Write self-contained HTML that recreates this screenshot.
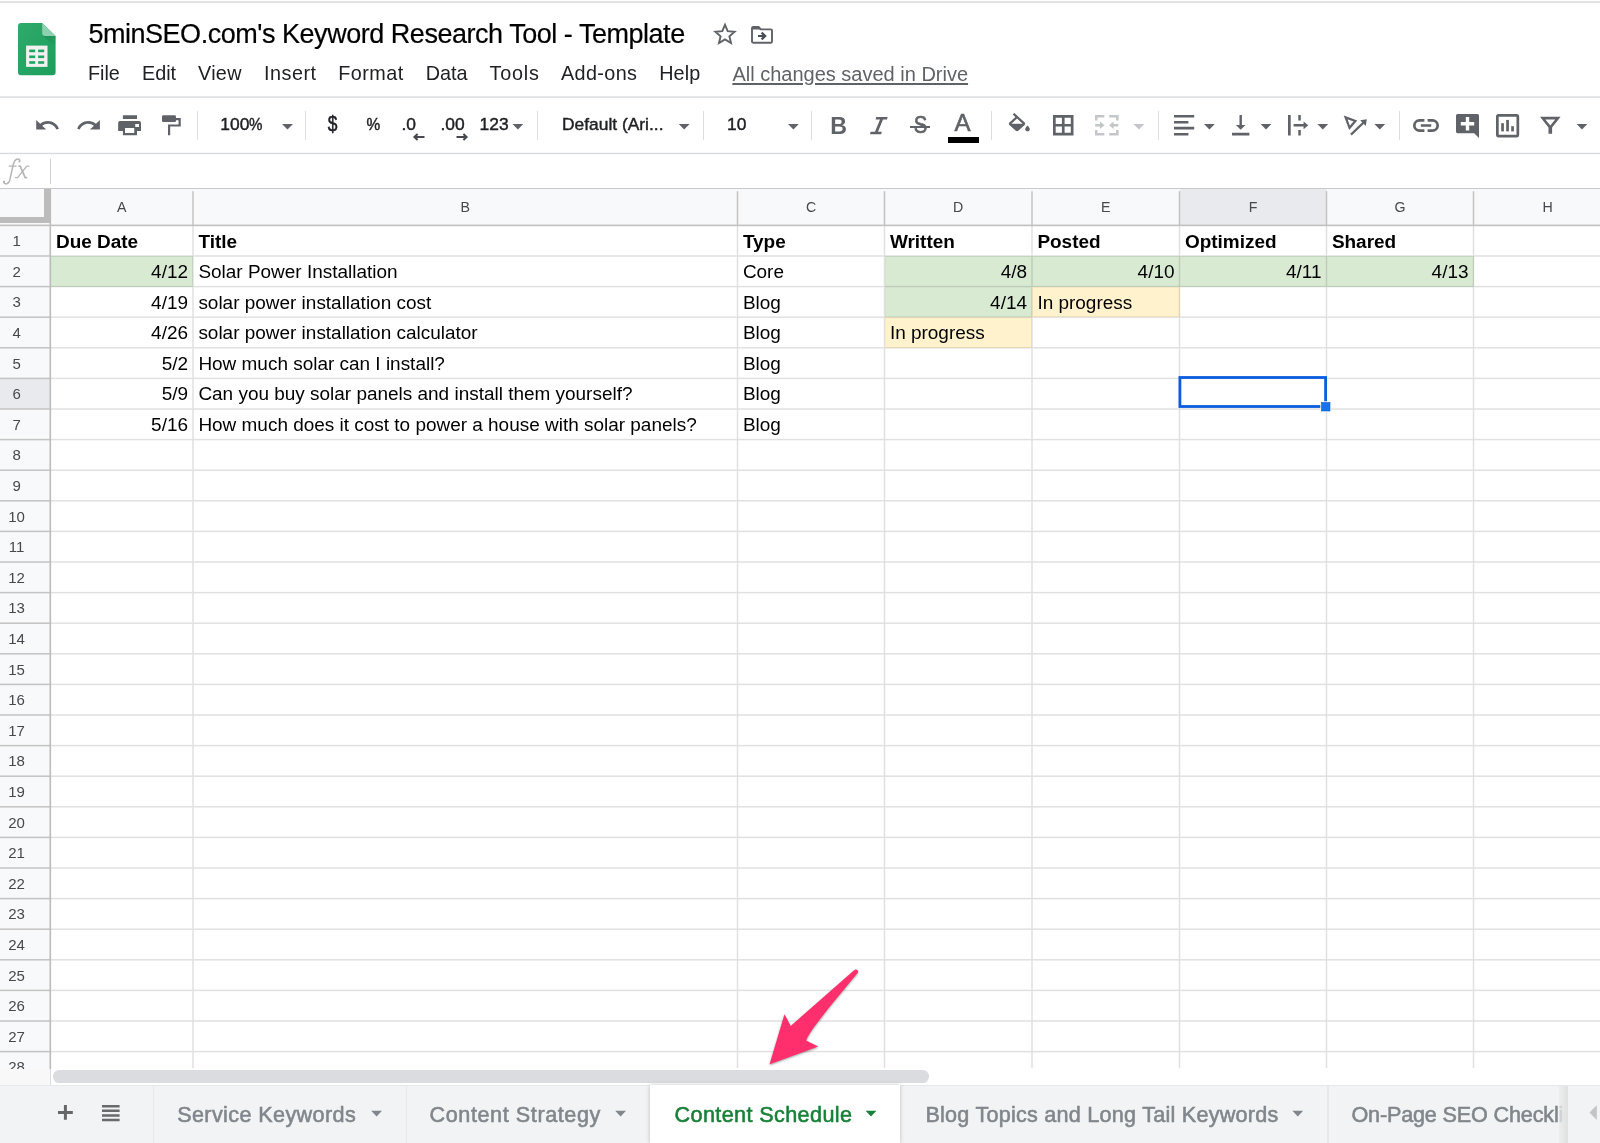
<!DOCTYPE html><html><head><meta charset="utf-8"><title>Sheets</title><style>
*{box-sizing:border-box;margin:0;padding:0}
html,body{width:1600px;height:1143px;overflow:hidden;background:#fff}
body{font-family:"Liberation Sans", sans-serif;position:relative;color:#000;will-change:transform}
.abs{position:absolute}
.t{position:absolute;white-space:pre;line-height:1}
.menu{font-size:19.8px;color:#202124;top:63.9px}
.tb{font-size:17.4px;color:#202124;top:116.3px;-webkit-text-stroke:0.42px #202124}
.sep{position:absolute;width:1.3px;background:#dcdee2;top:111px;height:29px}
.cell{position:absolute;white-space:pre;font-size:18.97px;line-height:1;color:#000}
.ch{position:absolute;font-size:14.2px;color:#45494d;line-height:1;text-align:center;width:40px;margin-left:-20px}
.rh{position:absolute;font-size:15px;color:#45494d;line-height:1;text-align:center;width:50px;left:-8.4px}
.tab{position:absolute;white-space:pre;font-size:21.6px;line-height:1;color:#80868b;top:1104.1px;-webkit-text-stroke:0.55px #80868b;letter-spacing:0.38px}
svg{position:absolute;overflow:visible}
</style></head><body>
<div class="abs" style="left:0;top:1px;width:1600px;height:2px;background:#dfe1e5"></div>
<svg style="left:0;top:0" width="1600" height="200"><rect x="0" y="96.2" width="1600" height="1.8" fill="#dfe1e4"/><rect x="0" y="152.75" width="1600" height="1.4" fill="#d7d9dd"/></svg>
<svg style="left:17.8px;top:23.4px" width="37.6" height="52.3" viewBox="0 0 37.6 52.3">
<defs><linearGradient id="lg" x1="0" y1="0" x2="1" y2="1"><stop offset="0" stop-color="#2fab6b"/><stop offset="1" stop-color="#1d9d5c"/></linearGradient>
<linearGradient id="sh" x1="0" y1="0" x2="1" y2="1"><stop offset="0" stop-color="#1a7d4a" stop-opacity="0.55"/><stop offset="1" stop-color="#1a7d4a" stop-opacity="0"/></linearGradient></defs>
<path d="M3 0 H24.2 L37.6 13 V49.3 a3 3 0 0 1 -3 3 H3 a3 3 0 0 1 -3 -3 V3 a3 3 0 0 1 3 -3z" fill="url(#lg)"/>
<path d="M24.6 12.6 L37.6 13 V24z" fill="url(#sh)"/>
<path d="M24.2 0 L37.6 13 H27.2 a3 3 0 0 1 -3 -3z" fill="#8ed1b0"/>
<rect x="8.1" y="22.6" width="21.4" height="21.3" fill="#f1f1f1"/>
<g fill="#1fa463"><rect x="11.2" y="26.6" width="6" height="2.6"/><rect x="20.1" y="26.6" width="6.1" height="2.6"/>
<rect x="11.2" y="32.5" width="6" height="2.6"/><rect x="20.1" y="32.5" width="6.1" height="2.6"/>
<rect x="11.2" y="38.2" width="6" height="2.6"/><rect x="20.1" y="38.2" width="6.1" height="2.6"/></g>
</svg>
<div class="t" style="left:88.4px;top:20.6px;font-size:27px;letter-spacing:-0.47px;color:#000;-webkit-text-stroke:0.2px #000">5minSEO.com's Keyword Research Tool - Template</div>
<svg style="left:713.5px;top:23.1px" width="22" height="21" viewBox="0 0 22 21"><path d="M11 1.8 L13.7 8.2 L20.6 8.8 L15.4 13.3 L17 20 L11 16.4 L5 20 L6.6 13.3 L1.4 8.8 L8.3 8.2z" fill="none" stroke="#5f6368" stroke-width="1.9" stroke-linejoin="miter"/></svg>
<svg style="left:751px;top:26px" width="22" height="18" viewBox="0 0 22 18"><path d="M1 2.2 a1.2 1.2 0 0 1 1.2 -1.2 H7.6 L9.8 3.4 H19.8 a1.2 1.2 0 0 1 1.2 1.2 V15.6 a1.2 1.2 0 0 1 -1.2 1.2 H2.2 a1.2 1.2 0 0 1 -1.2 -1.2z" fill="none" stroke="#5f6368" stroke-width="1.9"/><path d="M1 1 H7.6 L9.8 3.6 H1z" fill="#5f6368"/><path d="M7 10 H13.6 M10.6 6.6 L14.2 10 L10.6 13.4" fill="none" stroke="#4a4d51" stroke-width="2.2"/></svg>
<div class="t menu" style="left:88px;letter-spacing:0px">File</div>
<div class="t menu" style="left:142px;letter-spacing:0px">Edit</div>
<div class="t menu" style="left:198px;letter-spacing:0.3px">View</div>
<div class="t menu" style="left:264px;letter-spacing:0.5px">Insert</div>
<div class="t menu" style="left:338.3px;letter-spacing:0.46px">Format</div>
<div class="t menu" style="left:425.8px;letter-spacing:0px">Data</div>
<div class="t menu" style="left:489.6px;letter-spacing:0.75px">Tools</div>
<div class="t menu" style="left:561px;letter-spacing:0.38px">Add-ons</div>
<div class="t menu" style="left:659.2px;letter-spacing:0.1px">Help</div>
<div class="t menu" style="left:732.4px;color:#5f6368;text-decoration:underline;text-decoration-thickness:1.5px;text-underline-offset:2px;font-size:20px">All changes saved in Drive</div>
<svg style="left:0;top:0" width="1" height="1"><path transform="translate(33.980000000000004 112.58) scale(1.11 1.06)" d="M12.5 8c-2.65 0-5.05.99-6.9 2.6L2 7v9h9l-3.62-3.62c1.39-1.16 3.16-1.88 5.12-1.88 3.54 0 6.55 2.31 7.6 5.5l2.37-.78C21.08 11.03 17.15 8 12.5 8z" fill="#5f6368" /></svg>
<svg style="left:0;top:0" width="1" height="1"><path transform="translate(75.4906 112.58) scale(1.11 1.06)" d="M18.4 10.6C16.55 8.99 14.15 8 11.5 8c-4.65 0-8.58 3.03-9.96 7.22L3.9 16c1.05-3.19 4.05-5.5 7.6-5.5 1.95 0 3.73.72 5.12 1.88L13 16h9V7l-3.6 3.6z" fill="#5f6368" /></svg>
<svg style="left:0;top:0" width="1" height="1"><path d="M122.9 115.25 H137 V119 H122.9z M119.95 121.1 H139.2 a1.8 1.8 0 0 1 1.8 1.8 V130.9 H137 V135.25 H122.9 V130.9 H118.15 V122.9 a1.8 1.8 0 0 1 1.8 -1.8z M125 128 V133 H134.25 V128z M135.25 123.9 V127 H139 V123.9z" fill="#5f6368" fill-rule="evenodd"/></svg>
<svg style="left:0;top:0" width="1" height="1"><rect x="162" y="115.25" width="14" height="6.75" rx="1.3" fill="#5f6368"/><path d="M176 119.1 H179.65 V125.5 H169.1 V135.25" fill="none" stroke="#5f6368" stroke-width="2.2"/></svg>
<div class="sep" style="left:196.8px"></div>
<div class="t tb" style="left:220.3px">100</div><div class="t tb" style="left:249.4px;transform:scaleX(0.87);transform-origin:0 50%">%</div>
<svg style="left:0;top:0" width="1" height="1"><path d="M282 124 H293 L287.5 129.4z" fill="#5f6368"/></svg>
<div class="sep" style="left:304.8px"></div>
<div class="t tb" style="left:327.8px;top:116.4px;transform:scaleY(1.22)">$</div>
<div class="t tb" style="left:366.6px;font-size:15.4px;top:117.2px;transform:scaleY(1.06);transform-origin:50% 50%">%</div>
<div class="t tb" style="left:401.5px">.0</div>
<svg style="left:413px;top:133px" width="12" height="8" viewBox="0 0 12 8"><path d="M11.5 4 H2 M4.6 1 L1.4 4 L4.6 7" fill="none" stroke="#45484c" stroke-width="2"/></svg>
<div class="t tb" style="left:440.5px">.00</div>
<svg style="left:456px;top:133px" width="12" height="8" viewBox="0 0 12 8"><path d="M0.5 4 H10 M7.4 1 L10.6 4 L7.4 7" fill="none" stroke="#45484c" stroke-width="2"/></svg>
<div class="t tb" style="left:479.6px">123</div>
<svg style="left:0;top:0" width="1" height="1"><path d="M512.5 124 H523.3 L517.9 129.4z" fill="#5f6368"/></svg>
<div class="sep" style="left:536.8px"></div>
<div class="t tb" style="left:562px">Default (Ari...</div>
<svg style="left:0;top:0" width="1" height="1"><path d="M678.8 124 H689.6 L684.2 129.4z" fill="#5f6368"/></svg>
<div class="sep" style="left:703px"></div>
<div class="t tb" style="left:727px">10</div>
<svg style="left:0;top:0" width="1" height="1"><path d="M788 124 H798.8 L793.4 129.4z" fill="#5f6368"/></svg>
<div class="sep" style="left:811px"></div>
<div class="t" style="left:830.2px;top:114.6px;font-size:23.2px;font-weight:bold;color:#5f6368">B</div>
<svg style="left:870px;top:116.8px" width="18.5" height="17.2" viewBox="0 0 18.5 17.2"><path d="M6.2 0 H17.6 L17 2.5 H13 L8 14.7 H11.8 L11.2 17.2 H0 L0.6 14.7 H5 L10 2.5 H5.6z" fill="#5f6368"/></svg>
<div class="t" style="left:912.6px;top:115.3px;font-size:22.6px;color:#5f6368;-webkit-text-stroke:0.6px #5f6368;transform:scale(0.9,1.03)">S</div>
<div class="abs" style="left:910.2px;top:125.7px;width:20.3px;height:2.3px;background:#5f6368"></div>
<div class="t" style="left:954.4px;top:111.1px;font-size:24px;color:#5f6368;-webkit-text-stroke:0.6px #5f6368">A</div>
<div class="abs" style="left:948px;top:136.8px;width:30.6px;height:6px;background:#000"></div>
<div class="sep" style="left:990.6px"></div>
<svg style="left:0;top:0" width="1" height="1"><path transform="translate(1005.4 112.9) scale(1.165 1.085)" d="M16.56 8.94L7.62 0 6.21 1.41l2.38 2.38-5.15 5.15c-.59.59-.59 1.54 0 2.12l5.5 5.5c.29.29.68.44 1.06.44s.77-.15 1.06-.44l5.5-5.5c.59-.58.59-1.53 0-2.12zM5.21 10L10 5.21 14.79 10H5.21zM19 11.5s-2 2.17-2 3.5c0 1.1.9 2 2 2s2-.9 2-2c0-1.33-2-3.5-2-3.5z" fill="#5f6368" /></svg>
<svg style="left:1052.8px;top:115px" width="20.5" height="20.5" viewBox="0 0 20.5 20.5"><path d="M0 0 H20.5 V20.5 H0z M2.7 2.7 V8.9 H8.9 V2.7z M11.6 2.7 V8.9 H17.8 V2.7z M2.7 11.6 V17.8 H8.9 V11.6z M11.6 11.6 V17.8 H17.8 V11.6z" fill="#5f6368" fill-rule="evenodd"/></svg>
<svg style="left:1095.2px;top:115px" width="23.6" height="20.5" viewBox="0 0 23.6 20.5"><g fill="none" stroke="#c4c7c9" stroke-width="2.5"><path d="M1.25 5.4 V1.25 H9.4 M14.2 1.25 H22.35 V5.4 M1.25 15.1 V19.25 H9.4 M14.2 19.25 H22.35 V15.1"/><path d="M0.2 10.25 H6" stroke-width="2.6"/><path d="M23.4 10.25 H17.6" stroke-width="2.6"/></g><path d="M5 6.4 L9.6 10.25 L5 14.1z M18.6 6.4 L14 10.25 L18.6 14.1z" fill="#c4c7c9"/></svg>
<svg style="left:0;top:0" width="1" height="1"><path d="M1133.4 124 H1144.4 L1138.9 129.4z" fill="#c4c7c9"/></svg>
<div class="sep" style="left:1158px"></div>
<svg style="left:1174px;top:115px" width="20.5" height="20.5" viewBox="0 0 20.5 20.5"><path d="M0 0 H20.2 V2.6 H0z M0 6 H14.4 V8.6 H0z M0 11.8 H20.2 V14.4 H0z M0 17.9 H14.4 V20.5 H0z" fill="#5f6368"/></svg>
<svg style="left:0;top:0" width="1" height="1"><path d="M1204 124 H1214.8 L1209.4 129.4z" fill="#5f6368"/></svg>
<svg style="left:1232.4px;top:115px" width="17.4" height="20.5" viewBox="0 0 17.4 20.5"><path d="M0 17.8 H17.4 V20.4 H0z M7.5 0 H9.9 V10 H13.5 L8.7 14.8 L3.9 10 H7.5z" fill="#5f6368"/></svg>
<svg style="left:0;top:0" width="1" height="1"><path d="M1260.6 124 H1271.4 L1266.0 129.4z" fill="#5f6368"/></svg>
<svg style="left:1288px;top:114.9px" width="20.4" height="20.6" viewBox="0 0 20.4 20.6"><path d="M0 0 H2.7 V20.6 H0z M10.3 0 H12.8 V5.6 H10.3z M10.3 15 H12.8 V20.6 H10.3z M5.6 9.1 H15.6 V6.4 L20.3 10.3 L15.6 14.2 V11.5 H5.6z" fill="#5f6368"/></svg>
<svg style="left:0;top:0" width="1" height="1"><path d="M1317.4 124 H1328.2 L1322.8000000000002 129.4z" fill="#5f6368"/></svg>
<svg style="left:1344px;top:115px" width="23.5" height="20.5" viewBox="0 0 23.5 20.5"><g fill="none" stroke="#5f6368" stroke-width="2.2" stroke-linejoin="miter"><path d="M1.6 2.4 L11.4 6 L5.6 12.8z"/><path d="M7 19.6 L20.4 6.8"/></g><path d="M22.8 4.2 L16.2 5.2 L21.8 11z" fill="#5f6368"/></svg>
<svg style="left:0;top:0" width="1" height="1"><path d="M1374.4 124 H1385.2 L1379.8000000000002 129.4z" fill="#5f6368"/></svg>
<div class="sep" style="left:1398.8px"></div>
<svg style="left:1413.2px;top:118.9px" width="26" height="13" viewBox="0 0 26 13"><path d="M11.4 1.35 H6.5 a5.15 5.15 0 0 0 0 10.3 H11.4 M14.6 1.35 H19.5 a5.15 5.15 0 0 1 0 10.3 H14.6 M7.8 6.5 H18.2" fill="none" stroke="#5f6368" stroke-width="2.7"/></svg>
<svg style="left:1455.8px;top:113.7px" width="23" height="24" viewBox="0 0 23 24"><path d="M1.6 0 H21.4 a1.6 1.6 0 0 1 1.6 1.6 V24 L18.2 19.2 H1.6 a1.6 1.6 0 0 1 -1.6 -1.6 V1.6 a1.6 1.6 0 0 1 1.6 -1.6z M9.8 3 V8 H4.8 V11.4 H9.8 V16.4 H13.2 V11.4 H18.2 V8 H13.2 V3z" fill="#5f6368" fill-rule="evenodd"/></svg>
<svg style="left:1496.4px;top:113.7px" width="23.2" height="23.4" viewBox="0 0 23.2 23.4"><rect x="1.35" y="1.35" width="20.5" height="20.7" rx="1.2" fill="none" stroke="#5f6368" stroke-width="2.7"/><rect x="5.2" y="9.2" width="2.7" height="8.2" fill="#5f6368"/><rect x="10.2" y="5.9" width="2.7" height="11.5" fill="#5f6368"/><rect x="15.2" y="12.2" width="2.7" height="5.2" fill="#5f6368"/></svg>
<svg style="left:0;top:0" width="1" height="1"><path d="M1540 116.7 H1560.6 L1552.1 127.4 V133.7 H1548.5 V127.4z M1545.4 119.4 H1555.2 L1550.3 125.5z" fill="#5f6368" fill-rule="evenodd"/></svg>
<svg style="left:0;top:0" width="1" height="1"><path d="M1576.6 124 H1587.4 L1582.0 129.4z" fill="#5f6368"/></svg>
<svg style="left:0;top:0" width="60" height="200"><g fill="none" stroke="#b5b5b5" stroke-linecap="round"><path d="M3.7 181.6 C3.4 184.4 8.4 185.4 9.7 180.4 L12.9 166 C13.9 161.2 15.6 158.9 17.8 158.9 C19.6 158.9 20.2 160.4 19.5 161.5" stroke-width="1.5"/><path d="M9.2 166.1 H16.2" stroke-width="1.4"/><path d="M18.4 166.1 H20.2 L25.2 177.6 H27.2" stroke-width="1.7" stroke-linecap="butt"/><path d="M28.8 166.1 H26.8 L17.6 177.6 H15.6" stroke-width="1.25"/></g><circle cx="3.9" cy="181.8" r="1.1" fill="#b5b5b5"/><circle cx="19.3" cy="161.3" r="1" fill="#b5b5b5"/></svg>
<div class="abs" style="left:49.7px;top:159px;width:1.3px;height:24.8px;background:#cfcfcf"></div>
<div class="abs" style="left:0;top:187.6px;width:1600px;height:1.8px;background:#c9c9c9"></div>
<div class="abs" style="left:0;top:189px;width:1600px;height:36.400000000000006px;background:#f8f9fa"></div>
<div class="abs" style="left:0;top:189px;width:50.6px;height:896px;background:#f8f9fa"></div>
<div class="abs" style="left:1179.5px;top:189px;width:147.0px;height:36.400000000000006px;background:#e8eaed"></div>
<div class="abs" style="left:0;top:378.4px;width:50.6px;height:30.6px;background:#e8eaed"></div>
<div class="abs" style="left:50.6px;top:256.0px;width:142.4px;height:30.600000000000023px;background:#d9ead3"></div>
<div class="abs" style="left:884.5px;top:256.0px;width:147.5px;height:30.600000000000023px;background:#d9ead3"></div>
<div class="abs" style="left:1032px;top:256.0px;width:147.5px;height:30.600000000000023px;background:#d9ead3"></div>
<div class="abs" style="left:1179.5px;top:256.0px;width:147.0px;height:30.600000000000023px;background:#d9ead3"></div>
<div class="abs" style="left:1326.5px;top:256.0px;width:147.0px;height:30.600000000000023px;background:#d9ead3"></div>
<div class="abs" style="left:884.5px;top:286.6px;width:147.5px;height:30.600000000000023px;background:#d9ead3"></div>
<div class="abs" style="left:1032px;top:286.6px;width:147.5px;height:30.600000000000023px;background:#fff2cc"></div>
<div class="abs" style="left:884.5px;top:317.20000000000005px;width:147.5px;height:30.599999999999966px;background:#fff2cc"></div>
<svg style="left:0;top:0" width="1600" height="1143"><g opacity="0.118" fill="#000"><rect x="50.60" y="255.25" width="1549.40" height="1.50"/><rect x="50.60" y="285.85" width="1549.40" height="1.50"/><rect x="50.60" y="316.45" width="1549.40" height="1.50"/><rect x="50.60" y="347.05" width="1549.40" height="1.50"/><rect x="50.60" y="377.65" width="1549.40" height="1.50"/><rect x="50.60" y="408.25" width="1549.40" height="1.50"/><rect x="50.60" y="438.85" width="1549.40" height="1.50"/><rect x="50.60" y="469.45" width="1549.40" height="1.50"/><rect x="50.60" y="500.05" width="1549.40" height="1.50"/><rect x="50.60" y="530.65" width="1549.40" height="1.50"/><rect x="50.60" y="561.25" width="1549.40" height="1.50"/><rect x="50.60" y="591.85" width="1549.40" height="1.50"/><rect x="50.60" y="622.45" width="1549.40" height="1.50"/><rect x="50.60" y="653.05" width="1549.40" height="1.50"/><rect x="50.60" y="683.65" width="1549.40" height="1.50"/><rect x="50.60" y="714.25" width="1549.40" height="1.50"/><rect x="50.60" y="744.85" width="1549.40" height="1.50"/><rect x="50.60" y="775.45" width="1549.40" height="1.50"/><rect x="50.60" y="806.05" width="1549.40" height="1.50"/><rect x="50.60" y="836.65" width="1549.40" height="1.50"/><rect x="50.60" y="867.25" width="1549.40" height="1.50"/><rect x="50.60" y="897.85" width="1549.40" height="1.50"/><rect x="50.60" y="928.45" width="1549.40" height="1.50"/><rect x="50.60" y="959.05" width="1549.40" height="1.50"/><rect x="50.60" y="989.65" width="1549.40" height="1.50"/><rect x="50.60" y="1020.25" width="1549.40" height="1.50"/><rect x="50.60" y="1050.85" width="1549.40" height="1.50"/><rect x="192.25" y="225.40" width="1.50" height="842.60"/><rect x="736.75" y="225.40" width="1.50" height="842.60"/><rect x="883.75" y="225.40" width="1.50" height="842.60"/><rect x="1031.25" y="225.40" width="1.50" height="842.60"/><rect x="1178.75" y="225.40" width="1.50" height="842.60"/><rect x="1325.75" y="225.40" width="1.50" height="842.60"/><rect x="1472.75" y="225.40" width="1.50" height="842.60"/></g><rect x="0.00" y="255.25" width="50.60" height="1.50" fill="#c3c3c3"/><rect x="0.00" y="285.85" width="50.60" height="1.50" fill="#c3c3c3"/><rect x="0.00" y="316.45" width="50.60" height="1.50" fill="#c3c3c3"/><rect x="0.00" y="347.05" width="50.60" height="1.50" fill="#c3c3c3"/><rect x="0.00" y="377.65" width="50.60" height="1.50" fill="#c3c3c3"/><rect x="0.00" y="408.25" width="50.60" height="1.50" fill="#c3c3c3"/><rect x="0.00" y="438.85" width="50.60" height="1.50" fill="#c3c3c3"/><rect x="0.00" y="469.45" width="50.60" height="1.50" fill="#c3c3c3"/><rect x="0.00" y="500.05" width="50.60" height="1.50" fill="#c3c3c3"/><rect x="0.00" y="530.65" width="50.60" height="1.50" fill="#c3c3c3"/><rect x="0.00" y="561.25" width="50.60" height="1.50" fill="#c3c3c3"/><rect x="0.00" y="591.85" width="50.60" height="1.50" fill="#c3c3c3"/><rect x="0.00" y="622.45" width="50.60" height="1.50" fill="#c3c3c3"/><rect x="0.00" y="653.05" width="50.60" height="1.50" fill="#c3c3c3"/><rect x="0.00" y="683.65" width="50.60" height="1.50" fill="#c3c3c3"/><rect x="0.00" y="714.25" width="50.60" height="1.50" fill="#c3c3c3"/><rect x="0.00" y="744.85" width="50.60" height="1.50" fill="#c3c3c3"/><rect x="0.00" y="775.45" width="50.60" height="1.50" fill="#c3c3c3"/><rect x="0.00" y="806.05" width="50.60" height="1.50" fill="#c3c3c3"/><rect x="0.00" y="836.65" width="50.60" height="1.50" fill="#c3c3c3"/><rect x="0.00" y="867.25" width="50.60" height="1.50" fill="#c3c3c3"/><rect x="0.00" y="897.85" width="50.60" height="1.50" fill="#c3c3c3"/><rect x="0.00" y="928.45" width="50.60" height="1.50" fill="#c3c3c3"/><rect x="0.00" y="959.05" width="50.60" height="1.50" fill="#c3c3c3"/><rect x="0.00" y="989.65" width="50.60" height="1.50" fill="#c3c3c3"/><rect x="0.00" y="1020.25" width="50.60" height="1.50" fill="#c3c3c3"/><rect x="0.00" y="1050.85" width="50.60" height="1.50" fill="#c3c3c3"/><rect x="192.25" y="191.20" width="1.50" height="34.20" fill="#c3c3c3"/><rect x="736.75" y="191.20" width="1.50" height="34.20" fill="#c3c3c3"/><rect x="883.75" y="191.20" width="1.50" height="34.20" fill="#c3c3c3"/><rect x="1031.25" y="191.20" width="1.50" height="34.20" fill="#c3c3c3"/><rect x="1178.75" y="191.20" width="1.50" height="34.20" fill="#c3c3c3"/><rect x="1325.75" y="191.20" width="1.50" height="34.20" fill="#c3c3c3"/><rect x="1472.75" y="191.20" width="1.50" height="34.20" fill="#c3c3c3"/><rect x="0.00" y="224.60" width="1600.00" height="1.60" fill="#c0c0c0"/><rect x="49.50" y="189.00" width="1.60" height="896.00" fill="#bcbcbc"/></svg>
<div class="abs" style="left:44px;top:189px;width:6.6px;height:33.6px;background:#bcbcbc"></div>
<div class="abs" style="left:0;top:217px;width:50.6px;height:5.6px;background:#bcbcbc"></div>
<div class="ch" style="left:121.8px;top:200.4px">A</div>
<div class="ch" style="left:465.2px;top:200.4px">B</div>
<div class="ch" style="left:811.0px;top:200.4px">C</div>
<div class="ch" style="left:958.2px;top:200.4px">D</div>
<div class="ch" style="left:1105.8px;top:200.4px">E</div>
<div class="ch" style="left:1253.0px;top:200.4px">F</div>
<div class="ch" style="left:1400.0px;top:200.4px">G</div>
<div class="ch" style="left:1547.5px;top:200.4px">H</div>
<div class="rh" style="top:233.1px">1</div>
<div class="rh" style="top:263.7px">2</div>
<div class="rh" style="top:294.3px">3</div>
<div class="rh" style="top:324.9px">4</div>
<div class="rh" style="top:355.5px">5</div>
<div class="rh" style="top:386.1px">6</div>
<div class="rh" style="top:416.7px">7</div>
<div class="rh" style="top:447.3px">8</div>
<div class="rh" style="top:477.9px">9</div>
<div class="rh" style="top:508.5px">10</div>
<div class="rh" style="top:539.1px">11</div>
<div class="rh" style="top:569.7px">12</div>
<div class="rh" style="top:600.3px">13</div>
<div class="rh" style="top:630.9px">14</div>
<div class="rh" style="top:661.5px">15</div>
<div class="rh" style="top:692.1px">16</div>
<div class="rh" style="top:722.7px">17</div>
<div class="rh" style="top:753.3px">18</div>
<div class="rh" style="top:783.9px">19</div>
<div class="rh" style="top:814.5px">20</div>
<div class="rh" style="top:845.1px">21</div>
<div class="rh" style="top:875.7px">22</div>
<div class="rh" style="top:906.3px">23</div>
<div class="rh" style="top:936.9px">24</div>
<div class="rh" style="top:967.5px">25</div>
<div class="rh" style="top:998.1px">26</div>
<div class="rh" style="top:1028.7px">27</div>
<div class="rh" style="top:1059.3px">28</div>
<div class="cell" style="left:56.0px;top:232.9px;font-weight:bold;">Due Date</div>
<div class="cell" style="left:198.4px;top:232.9px;font-weight:bold;">Title</div>
<div class="cell" style="left:742.9px;top:232.9px;font-weight:bold;">Type</div>
<div class="cell" style="left:889.9px;top:232.9px;font-weight:bold;">Written</div>
<div class="cell" style="left:1037.4px;top:232.9px;font-weight:bold;">Posted</div>
<div class="cell" style="left:1184.9px;top:232.9px;font-weight:bold;">Optimized</div>
<div class="cell" style="left:1331.9px;top:232.9px;font-weight:bold;">Shared</div>
<div class="cell" style="right:1412.0px;top:263.0px;">4/12</div>
<div class="cell" style="left:198.4px;top:263.0px;">Solar Power Installation</div>
<div class="cell" style="left:742.9px;top:263.0px;">Core</div>
<div class="cell" style="right:1412.0px;top:293.6px;">4/19</div>
<div class="cell" style="left:198.4px;top:293.6px;">solar power installation cost</div>
<div class="cell" style="left:742.9px;top:293.6px;">Blog</div>
<div class="cell" style="right:1412.0px;top:324.2px;">4/26</div>
<div class="cell" style="left:198.4px;top:324.2px;">solar power installation calculator</div>
<div class="cell" style="left:742.9px;top:324.2px;">Blog</div>
<div class="cell" style="right:1412.0px;top:354.8px;">5/2</div>
<div class="cell" style="left:198.4px;top:354.8px;">How much solar can I install?</div>
<div class="cell" style="left:742.9px;top:354.8px;">Blog</div>
<div class="cell" style="right:1412.0px;top:385.4px;">5/9</div>
<div class="cell" style="left:198.4px;top:385.4px;">Can you buy solar panels and install them yourself?</div>
<div class="cell" style="left:742.9px;top:385.4px;">Blog</div>
<div class="cell" style="right:1412.0px;top:416.0px;">5/16</div>
<div class="cell" style="left:198.4px;top:416.0px;">How much does it cost to power a house with solar panels?</div>
<div class="cell" style="left:742.9px;top:416.0px;">Blog</div>
<div class="cell" style="right:573.0px;top:263.0px;">4/8</div>
<div class="cell" style="right:425.5px;top:263.0px;">4/10</div>
<div class="cell" style="right:278.5px;top:263.0px;">4/11</div>
<div class="cell" style="right:131.5px;top:263.0px;">4/13</div>
<div class="cell" style="right:573.0px;top:293.6px;">4/14</div>
<div class="cell" style="left:1037.4px;top:293.6px;">In progress</div>
<div class="cell" style="left:889.9px;top:324.2px;">In progress</div>
<svg style="left:0;top:0" width="1600" height="1143"><rect x="1179.9" y="377.5" width="145.7" height="29" fill="none" stroke="#0b5cdf" stroke-width="2.8"/><rect x="1320.3" y="401.3" width="10.9" height="10.9" fill="#fff"/><rect x="1321.5" y="402.5" width="8.5" height="8.5" fill="#1a73e8" stroke="#0b57d0" stroke-width="0.6"/></svg>
<div class="abs" style="left:51.300000000000004px;top:1068px;width:1600px;height:17px;background:#fff"></div>
<div class="abs" style="left:0;top:1068.8px;width:49.5px;height:16.200000000000045px;background:#f8f8f8"></div>
<div class="abs" style="left:49.5px;top:1068.8px;width:1.6px;height:16.200000000000045px;background:#dcdcdc"></div>
<div class="abs" style="left:52.6px;top:1070px;width:876.6px;height:12.6px;border-radius:6.3px;background:#dadce0"></div>
<div class="abs" style="left:0;top:1085px;width:1600px;height:58px;background:#f1f3f4;border-top:1px solid #e6e8ea"></div>
<svg style="left:58.2px;top:1105px" width="14.8" height="14.8" viewBox="0 0 14.8 14.8"><path d="M7.4 0 V14.8 M0 7.4 H14.8" stroke="#666" stroke-width="3" fill="none"/></svg>
<svg style="left:102px;top:1105px" width="17.6" height="16.2" viewBox="0 0 17.6 16.2"><path d="M0 0 H17.6 V2.5 H0z M0 4.6 H17.6 V7.1 H0z M0 9.2 H17.6 V11.7 H0z M0 13.7 H17.6 V16.2 H0z" fill="#6a6a6a"/></svg>
<div class="abs" style="left:650.2px;top:1085px;width:250.3px;height:58px;background:#fff;box-shadow:0 0 4px rgba(60,64,67,0.3)"></div>
<div class="abs" style="left:152.9px;top:1086px;width:1.3px;height:57px;background:#e6e8eb"></div>
<div class="abs" style="left:405.8px;top:1086px;width:1.3px;height:57px;background:#e6e8eb"></div>
<div class="abs" style="left:1327.4px;top:1086px;width:1.3px;height:57px;background:#e6e8eb"></div>
<div class="tab" style="left:177.2px;color:#80868b;-webkit-text-stroke-color:#80868b;letter-spacing:0.38px">Service Keywords</div>
<svg style="left:0;top:0" width="1" height="1"><path d="M371.2 1110.8 H382.0 L376.6 1116.6z" fill="#80868b"/></svg>
<div class="tab" style="left:429.6px;color:#80868b;-webkit-text-stroke-color:#80868b;letter-spacing:0.58px">Content Strategy</div>
<svg style="left:0;top:0" width="1" height="1"><path d="M615.2 1110.8 H626.0 L620.6 1116.6z" fill="#80868b"/></svg>
<div class="tab" style="left:674.6px;color:#188038;-webkit-text-stroke-color:#188038;letter-spacing:0.38px">Content Schedule</div>
<svg style="left:0;top:0" width="1" height="1"><path d="M865.6 1110.8 H876.4 L871.0 1116.6z" fill="#188038"/></svg>
<div class="tab" style="left:925.4px;color:#80868b;-webkit-text-stroke-color:#80868b;letter-spacing:0.24px">Blog Topics and Long Tail Keywords</div>
<svg style="left:0;top:0" width="1" height="1"><path d="M1292.4 1110.8 H1303.2 L1297.8000000000002 1116.6z" fill="#80868b"/></svg>
<div class="tab" style="left:1351.4px;color:#80868b;-webkit-text-stroke-color:#80868b;letter-spacing:-0.16px">On-Page SEO Checkli</div>
<div class="abs" style="left:1559.2px;top:1086px;width:9px;height:57px;background:linear-gradient(90deg,rgba(234,235,235,0.75),rgba(222,222,222,0.9))"></div>
<div class="abs" style="left:1568px;top:1086px;width:32px;height:57px;background:#f1f3f4"></div>
<svg style="left:0;top:0" width="1" height="1"><path d="M1596.8 1105.2 V1120 L1589.5 1112.6z" fill="#c3c4c5"/></svg>
<svg style="left:0;top:0;filter:drop-shadow(0.8px 1.3px 0.9px rgba(0,0,0,0.4))" width="1600" height="1143"><path d="M854.4 970.1 L790.7 1025.9 L784.5 1014.3 L769.6 1064.2 L818.2 1046.4 L806.1 1040.5 C809.5 1032 819 1020.5 830.5 1005.8 L857.9 972.6 A2.2 2.2 0 0 0 854.4 970.1z" fill="#ff2e6c"/></svg>
</body></html>
